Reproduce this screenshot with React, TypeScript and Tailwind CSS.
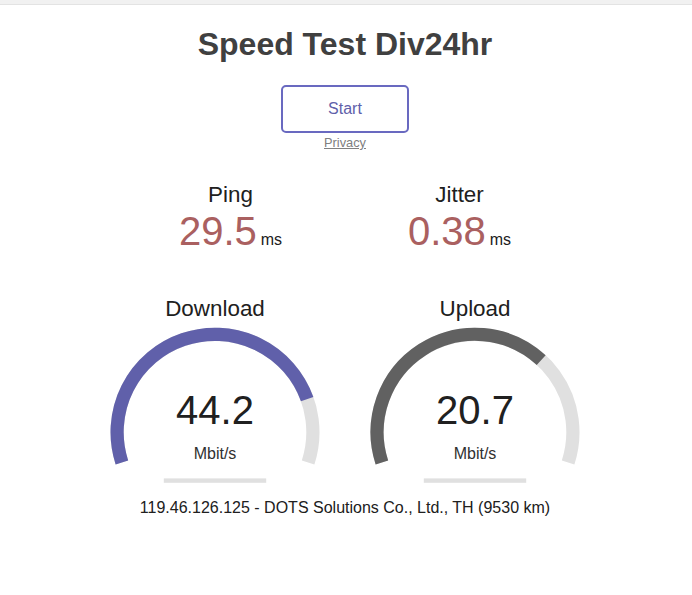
import React from "react";

const ARC_BK = "#E0E0E0";

// same math as the canvas meter: arc from -1.1π to 0.1π, amount maps speed
const mbpsToAmount = (s: number) => 1 - 1 / Math.pow(1.3, Math.sqrt(s));

const CX = 128;
const CY = 136.2;
const R = 97.9;

const pt = (a: number) => [CX + R * Math.cos(a), CY + R * Math.sin(a)];

const arcPath = (from: number, to: number) => {
  const [x1, y1] = pt(from);
  const [x2, y2] = pt(to);
  const large = to - from > Math.PI ? 1 : 0;
  return `M ${x1} ${y1} A ${R} ${R} 0 ${large} 1 ${x2} ${y2}`;
};

interface GaugeProps {
  name: string;
  value: string;
  color: string;
}

const Gauge = ({ name, value, color }: GaugeProps) => {
  const amount = mbpsToAmount(Number(value));
  const start = -Math.PI * 1.1;
  const end = amount * Math.PI * 1.2 - Math.PI * 1.1;

  return (
    <div className="relative w-[256px] h-[200px] flex flex-col items-center">
      <svg className="absolute inset-0" width="256" height="200" viewBox="0 0 256 200">
        <path d={arcPath(start, Math.PI * 0.1)} stroke={ARC_BK} strokeWidth="13.2" fill="none" />
        <path d={arcPath(start, end)} stroke={color} strokeWidth="13.2" fill="none" />
        <rect x="76.8" y="182.4" width="102.4" height="4.4" fill={ARC_BK} />
      </svg>
      <div className="relative text-[22.4px] leading-[26px] text-[#202020]">{name}</div>
      <div className="relative mt-[65px] text-[40px] leading-[46px] text-[#202020]">{value}</div>
      <div className="relative mt-[12px] text-[16px] leading-[18px] text-[#303030]">Mbit/s</div>
    </div>
  );
};

const Stat = ({ name, value }: { name: string; value: string }) => (
  <div className="w-[224px] h-[112px] flex flex-col items-center">
    <div className="text-[22.4px] leading-[26px] text-[#202020]">{name}</div>
    <div className="flex items-baseline">
      <span className="text-[40px] leading-[46px] text-[#AA6060]">{value}</span>
      <span className="ml-[4px] text-[16px] leading-[18px] text-[#202020]">ms</span>
    </div>
  </div>
);

const App = () => {
  return (
    <div className="w-full min-h-screen bg-white font-['Liberation_Sans',Arial,sans-serif] text-[#202020]">
      <div className="h-[5px] bg-[#f1f1f1] border-b border-[#e3e3e3]" />
      <div className="flex flex-col items-center pr-[2px]">
        <h1 className="mt-[21px] text-[32px] leading-[37px] font-bold text-[#404040]">Speed Test Div24hr</h1>
        <button className="mt-[22px] w-[128px] h-[48px] border-[2.4px] border-[#6969c0] rounded-[5px] text-[16px] text-[#6060AA] bg-transparent">
          Start
        </button>
        <a href="#" className="mt-[1px] text-[12.8px] leading-[18px] text-[#808080] underline">
          Privacy
        </a>

        <div className="mt-[30px] flex gap-[5px]">
          <Stat name="Ping" value="29.5" />
          <Stat name="Jitter" value="0.38" />
        </div>

        <div className="mt-[2px] flex gap-[4px]">
          <Gauge name="Download" value="44.2" color="#6060AA" />
          <Gauge name="Upload" value="20.7" color="#616161" />
        </div>

        <div className="mt-[3px] text-[16px] leading-[18px] text-[#202020]">
          119.46.126.125 - DOTS Solutions Co., Ltd., TH (9530 km)
        </div>
      </div>
    </div>
  );
};

export default App;
